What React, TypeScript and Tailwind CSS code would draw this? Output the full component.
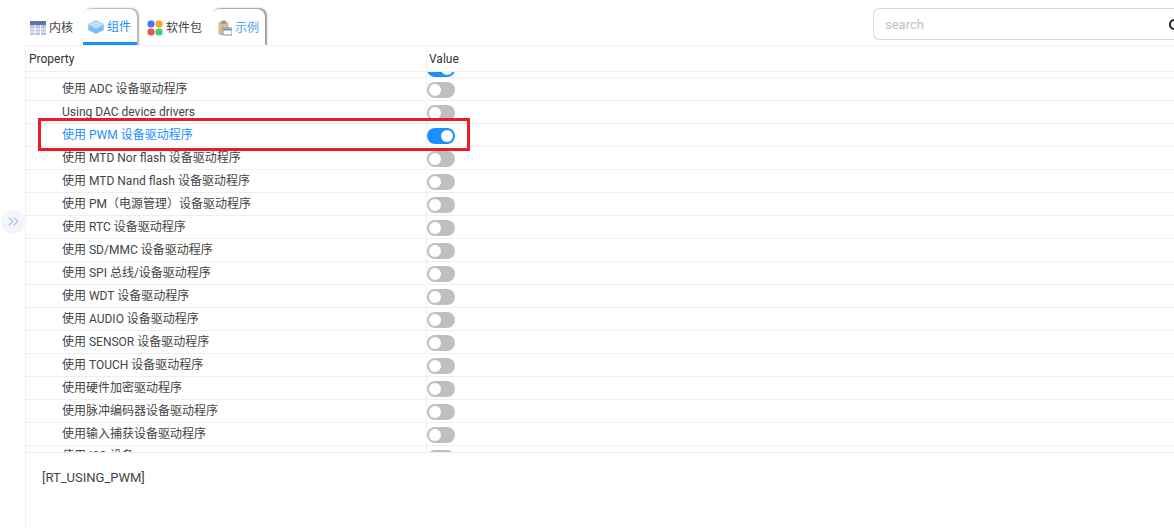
import { ChevronsRight } from "lucide-react";

const font = "font-['Roboto','Noto_Sans_CJK_SC',sans-serif]";

const rows = [
  { label: "使用 ADC 设备驱动程序" },
  { label: "Using DAC device drivers" },
  { label: "使用 PWM 设备驱动程序", on: true },
  { label: "使用 MTD Nor flash 设备驱动程序" },
  { label: "使用 MTD Nand flash 设备驱动程序" },
  { label: "使用 PM（电源管理）设备驱动程序" },
  { label: "使用 RTC 设备驱动程序" },
  { label: "使用 SD/MMC 设备驱动程序" },
  { label: "使用 SPI 总线/设备驱动程序" },
  { label: "使用 WDT 设备驱动程序" },
  { label: "使用 AUDIO 设备驱动程序" },
  { label: "使用 SENSOR 设备驱动程序" },
  { label: "使用 TOUCH 设备驱动程序" },
  { label: "使用硬件加密驱动程序" },
  { label: "使用脉冲编码器设备驱动程序" },
  { label: "使用输入捕获设备驱动程序" },
];

function Toggle({ on }: { on?: boolean }) {
  return (
    <span
      className={`flex h-4 w-7 shrink-0 items-center rounded-full p-0.5 ${
        on ? "justify-end bg-[#1890ff]" : "justify-start bg-[#bfbfbf]"
      }`}
    >
      <span className="size-3 rounded-full bg-white" />
    </span>
  );
}

function Row({ label, on }: { label: string; on?: boolean }) {
  return (
    <div className="flex h-[23px] border-b border-[#efefef]">
      <div
        className={`flex w-[400px] shrink-0 items-start pl-[36px] pt-[1px] text-xs leading-[20px] ${
          on ? "text-[#1890ff]" : "text-[#444]"
        }`}
      >
        {label}
      </div>
      <div className="flex flex-1 items-start border-l border-[#efefef] pt-[4px]">
        <Toggle on={on} />
      </div>
    </div>
  );
}

function TableIcon() {
  return (
    <svg width="16" height="16" viewBox="0 0 16 16" className="shrink-0">
      <rect x="0" y="1" width="16" height="14" fill="#b4c3e0" />
      <rect x="0" y="1" width="16" height="4" fill="#5a76ad" />
      <path d="M0 9h16M0 12h16M5 5v10M10.500 5v10" stroke="#fff" strokeWidth="1" />
    </svg>
  );
}

function CubeIcon() {
  return (
    <svg width="16" height="16" viewBox="0 0 16 16" className="shrink-0">
      <path d="M8 2 15 5.500v5L8 14 1 10.500v-5z" fill="#7cbdf5" stroke="#7cbdf5" strokeWidth="1.500" strokeLinejoin="round" />
      <path d="M8 2 15 5.500 8 9 1 5.500z" fill="#bfe0fb" stroke="#bfe0fb" strokeLinejoin="round" />
    </svg>
  );
}

function AppsIcon() {
  return (
    <svg width="16" height="16" viewBox="0 0 16 16" className="shrink-0">
      <rect x="0.500" y="0.500" width="7" height="7" rx="3" fill="#3f7cf0" />
      <rect x="8.500" y="0.500" width="7" height="7" rx="3" fill="#f5a623" />
      <rect x="0.500" y="8.500" width="7" height="7" rx="3" fill="#ef5350" />
      <rect x="8.500" y="8.500" width="7" height="7" rx="3" fill="#3ecf6e" />
    </svg>
  );
}

function ClipboardIcon() {
  return (
    <svg width="14" height="16" viewBox="0 0 14 16" className="shrink-0">
      <rect x="0.500" y="2" width="10" height="13" rx="1" fill="#e0b98a" />
      <rect x="3" y="0.500" width="5" height="3.500" rx="1" fill="#9a9a9a" />
      <rect x="5" y="8" width="9" height="7" fill="#fff" stroke="#7f93b5" />
      <rect x="5.500" y="8.500" width="8" height="2" fill="#6f8fc4" />
    </svg>
  );
}

export default function App() {
  return (
    <div className={`relative flex h-[528px] w-[1174px] flex-col overflow-hidden bg-white ${font}`}>
      {/* top tabs + search */}
      <div className="flex h-[45px] shrink-0 items-end justify-between pl-[30px]">
        <div className="flex items-end">
          <div className="flex h-9 w-[53px] items-center gap-[3px] pt-[2px] text-xs text-[#444]">
            <TableIcon />
            内核
          </div>
          <div className="flex h-9 w-[54px] items-center gap-[3px] rounded-t-lg border-b-[3px] border-b-[#1890ff] bg-white pl-[5px] pt-[2px] text-xs text-[#1890ff] shadow-[1.5px_-0.5px_1.5px_rgba(0,0,0,0.3)]">
            <CubeIcon />
            组件
          </div>
          <div className="flex h-9 w-[75px] items-center gap-[3px] pl-[10px] pt-[2px] text-xs text-[#444]">
            <AppsIcon />
            软件包
          </div>
          <div className="flex h-9 w-[53px] items-center gap-[3px] rounded-t-lg bg-white pl-[6px] pt-[2px] text-xs text-[#4aa3f5] shadow-[1.5px_-0.5px_1.5px_rgba(0,0,0,0.4)]">
            <ClipboardIcon />
            示例
          </div>
        </div>
        <div className="mb-[5px] flex h-8 w-[301px] shrink-0 items-center justify-between rounded-l-md border-y border-l border-[#d9d9d9] pl-[11px] pt-px text-[13px] text-[#bfbfbf]">
          search
          <span className="mr-[-6px] size-[11px] rounded-full border-2 border-[#222]" />
        </div>
      </div>

      {/* main */}
      <div className="flex min-h-0 flex-1">
        <div className="flex w-[25px] shrink-0 items-center">
          <div className="mb-[130px] ml-px flex size-6 items-center justify-center rounded-full bg-[#f2f6fb] text-[#5f93d6]">
            <ChevronsRight size={17} strokeWidth={1.25} />
          </div>
        </div>
        <div className="flex min-w-0 flex-1 flex-col border-l border-t border-[#efefef]">
          <div className="flex h-[26px] shrink-0 border-b border-[#efefef] text-xs leading-[26px] text-[#333]">
            <div className="w-[400px] shrink-0 pl-[3px]">Property</div>
            <div className="border-l border-[#efefef] pl-[2px]">Value</div>
          </div>
          <div className="h-[380px] shrink-0 overflow-hidden">
            <div className="flex h-[6px] overflow-hidden border-b border-[#efefef]">
              <div className="w-[400px] shrink-0" />
              <div className="flex-1 border-l border-[#efefef]">
                <div className="mt-[-11px]">
                  <Toggle on />
                </div>
              </div>
            </div>
            {rows.map((r) => (
              <Row key={r.label} label={r.label} on={r.on} />
            ))}
            <div className="flex h-[7px] overflow-hidden">
              <div className="w-[400px] shrink-0 overflow-hidden pl-[36px] text-xs leading-[20px] text-[#444]">
                使用 I2C 设备
              </div>
              <div className="flex-1 border-l border-[#efefef] pt-[4px]">
                <Toggle />
              </div>
            </div>
          </div>
          <div className="flex-1 border-t border-[#efefef] pl-[16px] pt-[16px] text-[13px] leading-[18px] text-[#444]">
            [RT_USING_PWM]
          </div>
        </div>
      </div>

      {/* red annotation box */}
      <div className="absolute left-[38px] top-[118px] h-[33px] w-[432px] border-[3px] border-[#ed1c24]" />
    </div>
  );
}
